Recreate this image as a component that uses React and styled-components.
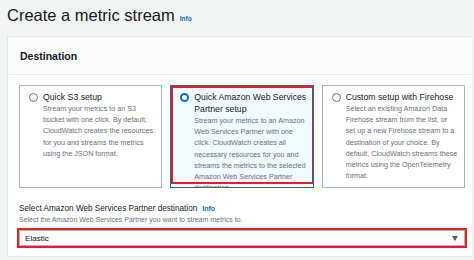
import React from "react";
import styled, { createGlobalStyle } from "styled-components";

const options = [
  {
    id: "s3",
    title: "Quick S3 setup",
    text: "Stream your metrics to an S3 bucket with one click. By default, CloudWatch creates the resources for you and streams the metrics using the JSON format.",
  },
  {
    id: "partner",
    title: "Quick Amazon Web Services Partner setup",
    text: "Stream your metrics to an Amazon Web Services Partner with one click. CloudWatch creates all necessary resources for you and streams the metrics to the selected Amazon Web Services Partner destination.",
  },
  {
    id: "firehose",
    title: "Custom setup with Firehose",
    text: "Select an existing Amazon Data Firehose stream from the list, or set up a new Firehose stream to a destination of your choice. By default, CloudWatch streams these metrics using the OpenTelemetry format.",
  },
];

const App = () => {
  const selected = "partner";

  return (
    <>
      <GlobalStyle />
      <Page>
        <TitleRow>
          <Title>Create a metric stream</Title>
          <InfoLink>Info</InfoLink>
        </TitleRow>
        <Panel>
          <PanelHeader>Destination</PanelHeader>
          <PanelBody>
            <Tiles>
              {options.map((o) => (
                <Tile key={o.id} active={o.id === selected}>
                  <Radio active={o.id === selected} />
                  <TileText>
                    <TileTitle>{o.title}</TileTitle>
                    <TileDesc>{o.text}</TileDesc>
                  </TileText>
                  {o.id === selected && <Highlight />}
                </Tile>
              ))}
            </Tiles>
            <Field>
              <FieldLabel>
                Select Amazon Web Services Partner destination
                <LabelInfo>Info</LabelInfo>
              </FieldLabel>
              <FieldHint>
                Select the Amazon Web Services Partner you want to stream metrics to.
              </FieldHint>
              <Select>
                <span>Elastic</span>
                <Caret />
              </Select>
            </Field>
          </PanelBody>
        </Panel>
      </Page>
    </>
  );
};

export default App;

const GlobalStyle = createGlobalStyle`
  body {
    margin: 0;
    background: #f2f3f3;
    font-family: "Liberation Sans", Arial, sans-serif;
    color: #16191f;
  }
`;

const Page = styled.div`
  width: 474px;
  height: 260px;
  padding: 0 1px 0 7px;
  box-sizing: border-box;
  overflow: hidden;
`;

const TitleRow = styled.div`
  display: flex;
  align-items: baseline;
  gap: 5px;
  height: 36px;
  padding-top: 5px;
  box-sizing: border-box;
`;

const Title = styled.h1`
  margin: 0;
  font-size: 16.5px;
  line-height: 20px;
  font-weight: 400;
  color: #16191f;
`;

const InfoLink = styled.span`
  font-size: 6.5px;
  font-weight: 700;
  color: #0073bb;
`;

const Panel = styled.section`
  background: #fff;
  border: 1px solid #e4e7e7;
  border-right-color: #eef0f0;
  height: 221px;
  box-sizing: border-box;
`;

const PanelHeader = styled.div`
  height: 37px;
  display: flex;
  align-items: center;
  padding-left: 12px;
  background: #fbfbfb;
  border-bottom: 1px solid #eaeded;
  font-size: 10.5px;
  font-weight: 700;
  color: #16191f;
`;

const PanelBody = styled.div`
  padding: 10px 7px 0 11px;
`;

const Tiles = styled.div`
  display: grid;
  grid-template-columns: repeat(3, 1fr);
  gap: 8px;
`;

const Tile = styled.div`
  position: relative;
  display: flex;
  gap: 5px;
  height: 103px;
  padding: 5px 6px 0 9px;
  box-sizing: border-box;
  overflow: hidden;
  border: 1px solid ${({ active }) => (active ? "#0073bb" : "#aab7b8")};
  background: ${({ active }) => (active ? "#f1faff" : "#fff")};
`;

const Highlight = styled.div`
  position: absolute;
  top: 0;
  left: 0;
  right: -1px;
  bottom: 3px;
  border: 2px solid #e0231c;
`;

const Radio = styled.span`
  flex: none;
  width: 9px;
  height: 9px;
  margin-top: 2px;
  border-radius: 50%;
  box-sizing: border-box;
  background: #fff;
  border: ${({ active }) => (active ? "2.5px solid #0073bb" : "1px solid #687078")};
`;

const TileText = styled.div`
  display: flex;
  flex-direction: column;
`;

const TileTitle = styled.div`
  font-size: 8.7px;
  line-height: 12px;
  color: #16191f;
`;

const TileDesc = styled.div`
  font-size: 7.2px;
  line-height: 11.2px;
  color: #687078;
`;

const Field = styled.div`
  padding-top: 15px;
`;

const FieldLabel = styled.div`
  display: flex;
  align-items: baseline;
  gap: 5px;
  font-size: 8.2px;
  line-height: 11px;
  color: #16191f;
`;

const LabelInfo = styled.span`
  font-size: 7px;
  font-weight: 700;
  color: #0073bb;
`;

const FieldHint = styled.div`
  font-size: 7px;
  line-height: 11px;
  color: #687078;
`;

const Select = styled.div`
  display: flex;
  align-items: center;
  justify-content: space-between;
  height: 16px;
  margin-top: 5px;
  padding: 0 6px 0 5px;
  box-sizing: border-box;
  background: #fafbfb;
  border: 1px solid #aab7b8;
  outline: 2px solid #e0231c;
  outline-offset: 0;
  font-size: 8.1px;
  color: #16191f;
`;

const Caret = styled.span`
  width: 0;
  height: 0;
  border-left: 3.5px solid transparent;
  border-right: 3.5px solid transparent;
  border-top: 5px solid #545b64;
`;
